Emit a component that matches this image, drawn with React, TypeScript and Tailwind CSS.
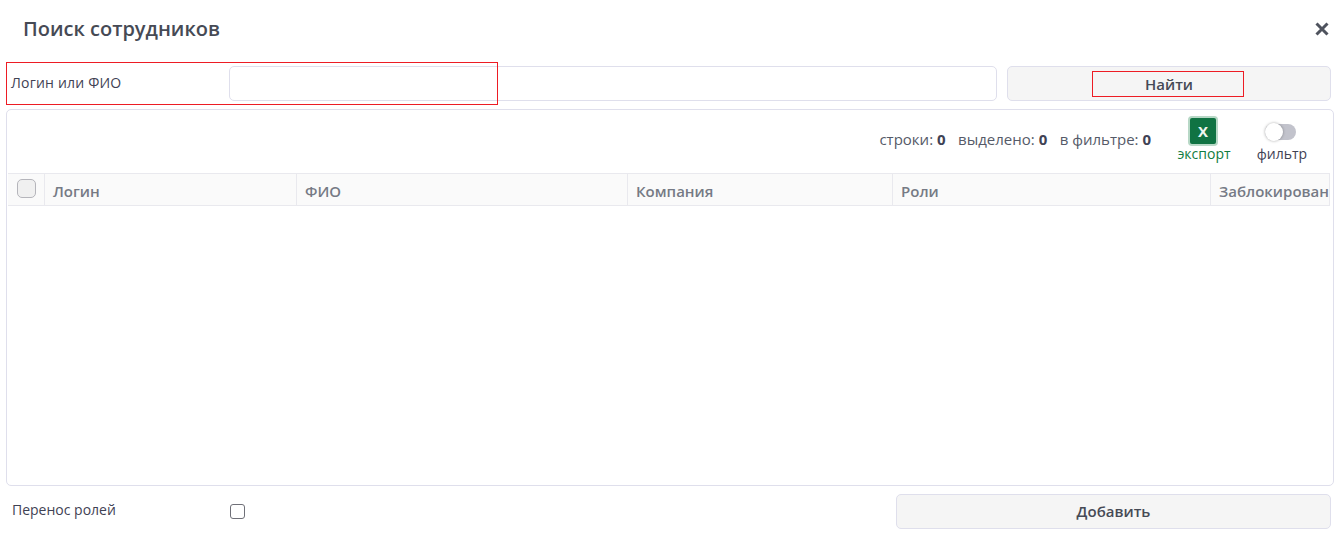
import React from "react";

const columns = [
  { title: "Логин", className: "w-[252px]" },
  { title: "ФИО", className: "w-[331px]" },
  { title: "Компания", className: "w-[265px]" },
  { title: "Роли", className: "w-[318px]" },
  { title: "Заблокирован", className: "flex-1" },
];

const counters = [
  { label: "строки:", value: 0 },
  { label: "выделено:", value: 0 },
  { label: "в фильтре:", value: 0 },
];

export default function App() {
  return (
    <div className="relative flex h-[535px] w-[1340px] flex-col overflow-hidden bg-white font-['Open_Sans',sans-serif] text-[#3f4254]">
      {/* title */}
      <div className="flex h-[62px] items-center justify-between pb-[4px] pl-[23px] pr-[11px]">
        <h2 className="text-[20px] font-semibold text-[#464a55]">Поиск сотрудников</h2>
        <svg viewBox="0 0 14 14" className="h-[14px] w-[14px] text-[#4f535e]">
          <path d="M1.5 1.5 12.5 12.5M12.5 1.5 1.5 12.5" stroke="currentColor" strokeWidth="3" fill="none" />
        </svg>
      </div>

      {/* search */}
      <div className="mt-[4px] flex h-[35px] items-center pl-[11px] pr-[9px]">
        <label className="w-[218px] pb-[3px] text-[14px] font-medium tracking-[0.2px]">Логин или ФИО</label>
        <input className="h-full w-[768px] rounded-[5px] border border-[#dfdfec] bg-white" />
        <button className="ml-[10px] h-full flex-1 rounded-[5px] border border-[#dfdfec] bg-[#f5f5f5] pt-[1px] text-[15px] font-semibold text-[#464a55]">
          Найти
        </button>
      </div>

      {/* grid */}
      <div className="mx-[6px] mt-[8px] flex h-[377px] w-[1328px] flex-col rounded-[5px] border border-[#dfdfec] pl-[1px]">
        <div className="flex h-[63px] items-start justify-end">
          <div className="mt-[18px] flex gap-[12.5px] text-[15px] text-[#555a68]">
            {counters.map((c) => (
              <span key={c.label}>
                {c.label} <b className="font-bold text-[#3f4254]">{c.value}</b>
              </span>
            ))}
          </div>
          <div className="ml-[25px] mt-[8px] flex w-[56px] flex-col items-center">
            <div className="mr-[2px] flex h-[26px] w-[26px] items-center justify-center rounded-[2px] bg-[#107343] shadow-[0_0_0_2px_#b7d8c6]">
              <span className="text-[15px] font-bold leading-none text-[#eef6f1]">X</span>
            </div>
            <span className="text-[14px] font-medium leading-[19px] text-[#107c41]">экспорт</span>
          </div>
          <div className="ml-[24px] mr-[25px] mt-[14px] flex w-[52px] flex-col items-center">
            <div className="relative mr-[3px] h-[16px] w-[31px] rounded-full bg-[#c2c3cc]">
              <span className="absolute -top-[1px] left-0 h-[18px] w-[18px] rounded-full bg-white shadow-[0_0_3px_rgba(0,0,0,0.35)]" />
            </div>
            <span className="mt-[4px] text-[14px] font-medium leading-[19px] text-[#3f4254]">фильтр</span>
          </div>
        </div>
        <div className="mr-[3px] flex h-[33px] border-y border-[#e9e9ee] bg-[#fafafa] text-[15px] font-semibold text-[#767a85]">
          <div className="flex w-[37px] justify-center border-r border-[#e9e9ee] pt-[5px]">
            <span className="h-[19px] w-[19px] rounded-[5px] border border-[#b5b5bb] bg-[#f0f0f0]" />
          </div>
          {columns.map((col) => (
            <div
              key={col.title}
              className={`flex items-center overflow-hidden whitespace-nowrap border-r border-[#e9e9ee] pl-[8px] pt-[3px] ${col.className}`}
            >
              {col.title}
            </div>
          ))}
        </div>
        <div className="flex-1" />
      </div>

      {/* footer */}
      <div className="mt-[8px] flex h-[35px] items-center pl-[12px] pr-[9px]">
        <label className="w-[218px] pb-[5px] text-[14px]">Перенос ролей</label>
        <input
          type="checkbox"
          className="h-[15px] w-[15px] appearance-none rounded-[3px] border border-[#6f7078] bg-white"
        />
        <button className="ml-auto h-full w-[435px] rounded-[5px] border border-[#dfdfec] bg-[#f5f5f5] text-[15px] font-semibold text-[#464a55]">
          Добавить
        </button>
      </div>

      {/* red highlight frames drawn on top of the form */}
      <div className="pointer-events-none absolute left-[6px] top-[62px] h-[43px] w-[492px] border border-[#ed1c24]" />
      <div className="pointer-events-none absolute left-[1092px] top-[71px] h-[26px] w-[152px] border border-[#ed1c24]" />
    </div>
  );
}
